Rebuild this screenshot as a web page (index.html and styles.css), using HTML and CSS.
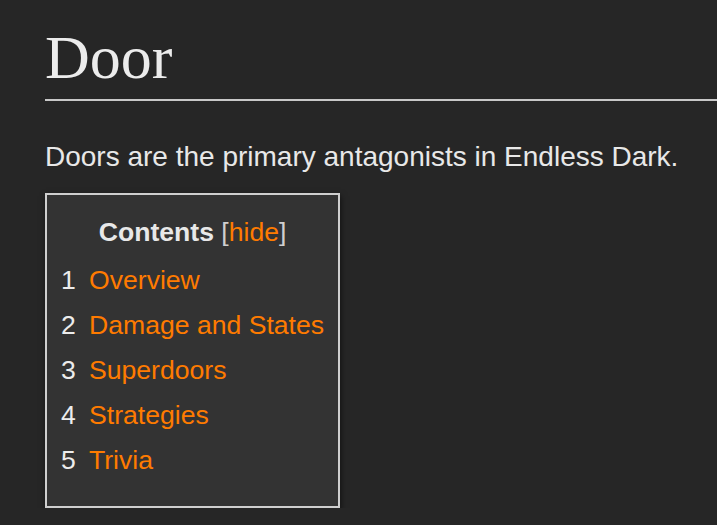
FILE: index.html
```html
<!DOCTYPE html>
<html lang="en">
<head>
  <meta charset="UTF-8">
  <title>Door</title>
  <link rel="stylesheet" href="styles.css">
</head>
<body>

<div class="content">
  <h1 class="page-title">Door</h1>

  <p>Doors are the primary antagonists in Endless Dark.</p>

  <div class="toc">
    <div class="toc-title">
      <b>Contents</b> <span class="toc-toggle">[<a href="#">hide</a>]</span>
    </div>
    <ul>
      <li><span class="num">1</span><a href="#Overview">Overview</a></li>
      <li><span class="num">2</span><a href="#Damage_and_States">Damage and States</a></li>
      <li><span class="num">3</span><a href="#Superdoors">Superdoors</a></li>
      <li><span class="num">4</span><a href="#Strategies">Strategies</a></li>
      <li><span class="num">5</span><a href="#Trivia">Trivia</a></li>
    </ul>
  </div>
</div>

</body>
</html>
```

FILE: styles.css
```css
body {
  margin: 0;
  background-color: #262626;
  color: #e8e8e8;
  font-family: "Liberation Sans", Arial, sans-serif;
  font-size: 28px;
  overflow: hidden;
}
.content {
  padding: 19px 0 0 45px;
}
.page-title {
  font-family: "Liberation Serif", "Times New Roman", serif;
  font-weight: normal;
  font-size: 62px;
  line-height: 1.25;
  margin: 0 0 36px;
  padding-bottom: 2px;
  border-bottom: 2px solid #c8c8c8;
  color: #ececec;
}
p {
  margin: 0 0 17px;
  line-height: 39px;
}
a {
  color: #ff7b00;
  text-decoration: none;
}
.toc {
  display: inline-block;
  font-size: 95%;
  background-color: #333;
  border: 2px solid #cfcfcf;
  box-shadow: 1px 3px 6px rgba(0, 0, 0, 0.55);
  padding: 19px 14px 23px 14px;
}
.toc-title {
  text-align: center;
  line-height: 36px;
  margin-bottom: 8px;
}
.toc-toggle {
  font-weight: normal;
  color: #cfcfcf;
}
.toc ul {
  list-style: none;
  margin: 0;
  padding: 0;
}
.toc li {
  line-height: 45px;
}
.toc .num {
  display: inline-block;
  width: 28px;
  color: #ececec;
}
```
